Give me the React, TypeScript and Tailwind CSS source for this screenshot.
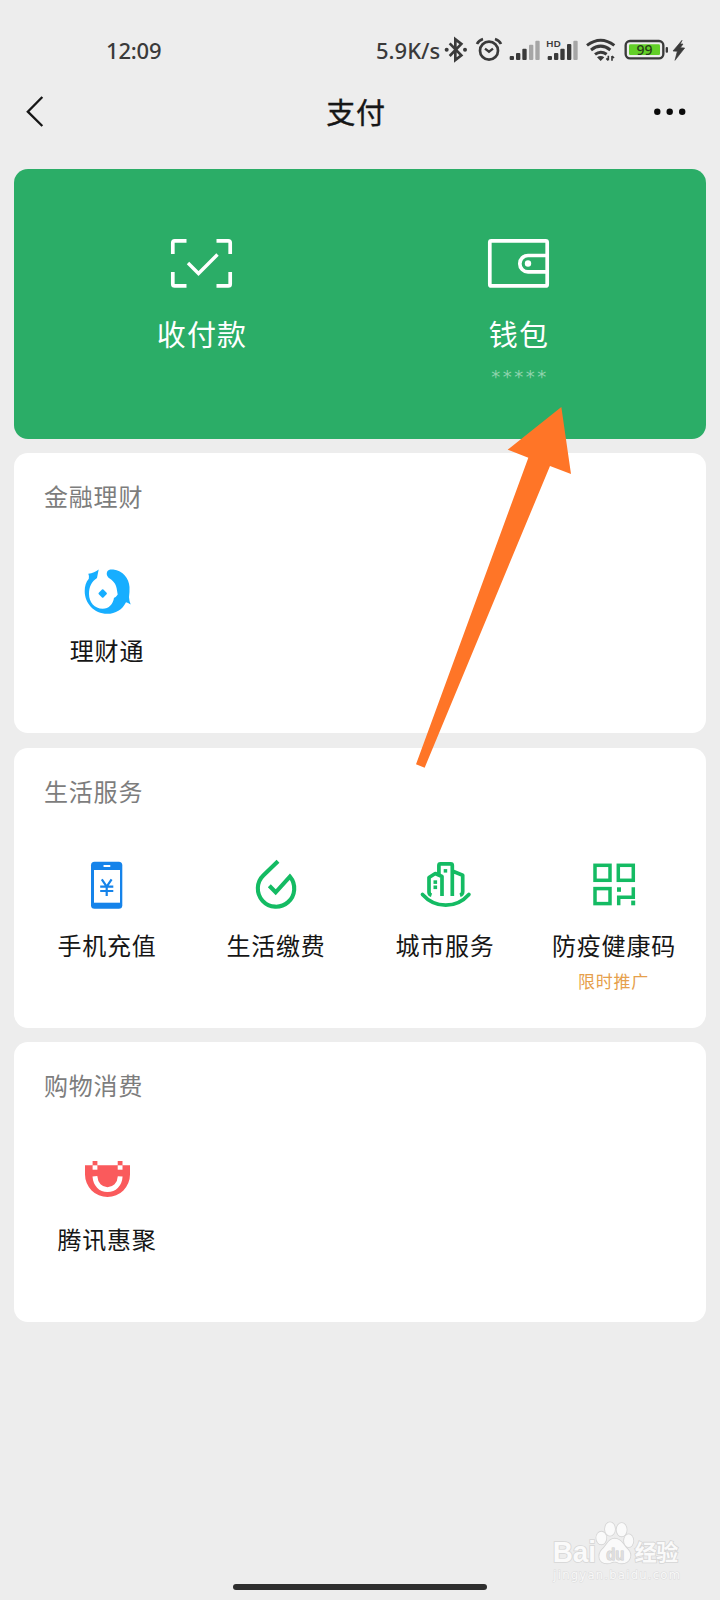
import type { ReactNode } from "react";

function StatusBar() {
  return (
    <div className="flex h-[78px] items-start pt-[35px] text-[#3a3a3a]">
      <div className="ml-[106px] h-[30px] w-[270px] text-[22px] leading-[30px] font-medium tracking-[-0.2px]">12:09</div>
      <div className="h-[30px] w-[67px] text-[22px] leading-[30px] font-medium whitespace-nowrap">5.9K/s</div>
      <svg className="h-[30px] w-[27px]" viewBox="250 30 81 90" fill="none" stroke="currentColor" strokeWidth="8">
        <path d="M270 55 L305 91 L287 105 V43 L305 57 L270 93" />
        <g fill="currentColor" stroke="none">
          <circle cx="261" cy="74" r="6" />
          <circle cx="316" cy="74" r="6" />
        </g>
      </svg>
      <svg className="ml-[5px] h-[30px] w-[28px]" viewBox="345 30 84 90" fill="none" stroke="currentColor" strokeWidth="8">
        <circle cx="387" cy="77" r="27" />
        <path d="M375 71 L387 80 L399 71" strokeWidth="7" />
        <path d="M351 57 Q356 46 369 42 M423 57 Q418 46 405 42" />
      </svg>
      <svg className="ml-[5px] h-[30px] w-[34px]" viewBox="444 30 102 90" fill="currentColor">
        <rect x="449" y="93" width="13" height="12" rx="3" />
        <rect x="468" y="84" width="13" height="21" rx="3" />
        <rect x="487" y="71" width="13" height="34" rx="3" />
        <rect x="507" y="59" width="13" height="46" rx="3" fill="#a6a6a6" />
        <rect x="526" y="47" width="13" height="58" rx="3" fill="#a6a6a6" />
      </svg>
      <svg className="ml-[3px] h-[30px] w-[35px]" viewBox="555 30 105 90" fill="currentColor">
        <text x="558" y="66" fontSize="28" fontWeight="600" textLength="45" lengthAdjust="spacingAndGlyphs">HD</text>
        <rect x="563" y="93" width="13" height="12" rx="3" />
        <rect x="582" y="84" width="13" height="21" rx="3" />
        <rect x="601" y="71" width="13" height="34" rx="3" />
        <rect x="621" y="57" width="13" height="48" rx="3" />
        <rect x="640" y="47" width="13" height="58" rx="3" fill="#a6a6a6" />
      </svg>
      <svg className="ml-[5px] h-[30px] w-[32px]" viewBox="675 30 96 90" fill="none" stroke="currentColor" strokeWidth="9">
        <path d="M681 61 Q722 30 763 61" />
        <path d="M693 75 Q722 52 751 75" />
        <path d="M705 88 Q722 75 740 88" />
        <path d="M711 97 Q722 89 733 97 L722 108Z" fill="currentColor" stroke="none" />
        <path d="M745 92 V106 M739 100 L745 106 M756 107 V93 M762 99 L756 93" strokeWidth="5" />
      </svg>
      <svg className="ml-[6px] h-[30px] w-[46px]" viewBox="789 30 138 90">
        <rect x="797" y="48" width="113" height="52" rx="13" fill="none" stroke="#3a3a3a" strokeWidth="7" />
        <rect x="807" y="58" width="93" height="32" rx="4" fill="#62cf27" />
        <rect x="917" y="66" width="7" height="17" rx="3" fill="#3a3a3a" />
        <text x="853.500" y="89" textAnchor="middle" fontSize="42" fontWeight="500" fill="#263d18">99</text>
      </svg>
      <svg className="ml-[3px] h-[30px] w-[15px]" viewBox="936 30 45 90" fill="currentColor">
        <path d="M966 46 L939 78 L952 79 L945 106 L974 69 L961 68 L969 57 L961 57Z" stroke="currentColor" strokeWidth="2" />
      </svg>
    </div>
  );
}

function Header() {
  return (
    <header className="flex h-[91px] items-start justify-between pl-[25px] pr-[32px] text-[#161616]">
      <svg className="mt-[16px] h-[36px] w-[20px]" viewBox="75 207 60 108" fill="none" stroke="currentColor" strokeWidth="7">
        <path d="M127 216 L83.500 260 L127 303" />
      </svg>
      <h1 className="ml-[13px] mt-[13px] text-[29px] leading-[44px] tracking-[0.8px] font-normal [-webkit-text-stroke:0.4px_#161616]">支付</h1>
      <svg className="mt-[24px] h-[20px] w-[34px]" viewBox="0 0 34 20" fill="#0a0a0a">
        <circle cx="3.300" cy="9.800" r="3.200" />
        <circle cx="15.700" cy="9.800" r="3.200" />
        <circle cx="28.200" cy="9.800" r="3.200" />
      </svg>
    </header>
  );
}

function PayCard() {
  return (
    <section className="mx-[14px] flex h-[270px] justify-center rounded-[14px] bg-[#2bad67] pt-[66px] text-white">
      <div className="flex w-[317px] flex-col items-center">
        <svg className="h-[56px] w-[69px]" viewBox="0 0 69 56" fill="none" stroke="currentColor" strokeWidth="3.700">
          <path d="M5.800 19 V7.800 Q5.800 5.800 7.800 5.800 H19.500 M49.500 5.800 H61.200 Q63.200 5.800 63.200 7.800 V19 M63.200 37 V48.900 Q63.200 50.900 61.200 50.900 H49.500 M19.500 50.900 H7.800 Q5.800 50.900 5.800 48.900 V37" />
          <path d="M21 28 L31.500 38.500 L50.500 19.500" strokeWidth="3.400" />
        </svg>
        <div className="mt-[22px] pl-[1px] text-[29px] leading-[44px] tracking-[1.2px]">收付款</div>
      </div>
      <div className="flex w-[317px] flex-col items-center">
        <svg className="h-[56px] w-[69px]" viewBox="0 0 69 56" fill="none" stroke="currentColor" strokeWidth="3.700">
          <rect x="5.800" y="5.800" width="57.400" height="45.100" rx="1.500" />
          <path d="M63 20.500 H44 A8.200 8.200 0 0 0 44 36.900 H63" />
          <circle cx="44" cy="28.500" r="3.200" fill="currentColor" stroke="none" />
        </svg>
        <div className="mt-[22px] pl-[1px] text-[29px] leading-[44px] tracking-[1.2px]">钱包</div>
        <div className="mt-[8px] pl-[3px] font-['DejaVu_Sans',sans-serif] text-[18px] leading-[24px] tracking-[2.500px] text-[#8ed3ad]">*****</div>
      </div>
    </section>
  );
}

function FishIcon() {
  return (
    <svg className="size-[60px]" viewBox="0 0 60 60" fill="#17aeff">
      <path d="M11.300 13.800 Q17.500 13.200 21.700 9.600 Q20.700 14.500 20 18 C14.500 21.500 12 27 12 34 C12 42 17.500 48.800 25.700 48.800 C32 48.800 36.200 44 37 37.800 Q38.200 38 40.700 34.500 L40 30.500 C39.500 25 37 21.500 33 18.800 C30.500 17 29 15 30 12 C31 9.500 33.500 9.300 36.300 9.500 C46 10.500 52 18.500 52.500 27 Q52.700 32 52 37.200 Q52.200 41 53.700 44.500 Q50.800 42.500 49 42.200 C45.500 49.500 38.500 53.800 30.300 53.800 C17 53.800 7.700 43 7.700 31.200 C7.700 26 9 22 11.800 18.800 Q12.400 16 11.300 13.800Z" />
      <path d="M25.700 30.300 L28.900 33.500 L25.700 36.700 L22.500 33.500Z" stroke="#17aeff" strokeWidth="2" strokeLinejoin="round" />
    </svg>
  );
}

function PhoneIcon() {
  return (
    <svg className="size-[60px]" viewBox="0 0 60 60">
      <rect x="14" y="6.700" width="31.300" height="47" rx="3.500" fill="#1583ea" />
      <rect x="17" y="15" width="26" height="32.700" fill="#fff" />
      <rect x="26.500" y="9.900" width="6.800" height="2" rx="0.500" fill="#fff" />
      <path d="M24.800 24.300 L29.700 31.500 L34.600 24.300 M23.200 31.700 H36.300 M23.200 36 H36.300 M29.700 31 V41" fill="none" stroke="#1583ea" strokeWidth="2.200" />
    </svg>
  );
}

function DropIcon() {
  return (
    <svg className="size-[60px]" viewBox="0 0 60 60" fill="none" stroke="#14bb63" strokeWidth="4.100">
      <path d="M32 6.200 L17.500 20.300 A18.200 18.200 0 1 0 43.900 21.700 L29.700 37.300 L23.300 30.700" />
    </svg>
  );
}

function CityIcon() {
  return (
    <svg className="size-[60px]" viewBox="0 0 60 60" fill="none" stroke="#14bb63" strokeWidth="3.700" strokeLinejoin="round">
      <path d="M7.500 39.500 Q17 50.200 30.700 50.200 Q44.400 50.200 53.900 39.500" strokeLinecap="round" />
      <path d="M16.500 40.300 Q14 39.500 14 37 V22.500 L20.300 18.500 L27 21.500 V41" />
      <path d="M23.900 19.500 V10.500 Q23.900 8.900 25.500 8.900 H35.700 Q37.300 8.900 37.300 10.500 V41 M37.300 16 L47.700 20.300 V36.500 Q47.700 39.500 45 40.300" />
      <g fill="#14bb63" stroke="none">
        <rect x="28.700" y="14.100" width="3.500" height="3.500" />
        <rect x="18.500" y="25.300" width="3.600" height="3.600" />
        <rect x="18.500" y="30.500" width="3.600" height="3.600" />
      </g>
    </svg>
  );
}

function CodeIcon() {
  return (
    <svg className="size-[60px]" viewBox="0 0 60 60" fill="none" stroke="#14bb63" strokeWidth="3.500">
      <rect x="11" y="10.300" width="15" height="15" />
      <rect x="34.300" y="10.300" width="15" height="15" />
      <rect x="11" y="33.600" width="15" height="15" />
      <path d="M34.700 50.300 V42.300 H49.300 V32.300" />
      <g fill="#14bb63" stroke="none">
        <rect x="33" y="32.300" width="4" height="4.500" />
        <rect x="47.200" y="45.600" width="4" height="4.700" />
      </g>
    </svg>
  );
}

function BagIcon() {
  return (
    <svg className="size-[60px]" viewBox="0 0 60 60">
      <path d="M8 16.300 H53 V25.500 A22.500 22.500 0 0 1 8 25.500Z" fill="#fa5a5c" />
      <g fill="#fa5a5c">
        <rect x="15.600" y="12" width="4.800" height="4.400" />
        <rect x="40.700" y="12" width="4.800" height="4.400" />
      </g>
      <g fill="#fff">
        <rect x="15.600" y="16.400" width="4.800" height="4.300" />
        <rect x="40.700" y="16.400" width="4.800" height="4.300" />
      </g>
      <path d="M17.900 27.300 C18.500 35.500 23.500 40.600 30.500 40.600 C37.500 40.600 42.700 35.500 43.200 27.300" fill="none" stroke="#fff" strokeWidth="4.800" />
    </svg>
  );
}

type Service = { name: string; icon: ReactNode; note?: string };

const sections: { title: string; items: Service[] }[] = [
  { title: "金融理财", items: [{ name: "理财通", icon: <FishIcon /> }] },
  {
    title: "生活服务",
    items: [
      { name: "手机充值", icon: <PhoneIcon /> },
      { name: "生活缴费", icon: <DropIcon /> },
      { name: "城市服务", icon: <CityIcon /> },
      { name: "防疫健康码", icon: <CodeIcon />, note: "限时推广" },
    ],
  },
  { title: "购物消费", items: [{ name: "腾讯惠聚", icon: <BagIcon /> }] },
];

function ServiceCard({ title, items }: { title: string; items: Service[] }) {
  return (
    <section className="h-[279.700px] rounded-[14px] bg-white px-2 pt-[26px]">
      <h2 className="pl-[22px] text-[24px] leading-[36px] tracking-[0.8px] text-[#7d7d7d]">{title}</h2>
      <div className="mt-[45px] grid grid-cols-4">
        {items.map((item) => (
          <div key={item.name} className="flex flex-col items-center">
            {item.icon}
            <div className="mt-[13px] pl-[1px] text-[24px] leading-[36px] tracking-[0.8px] whitespace-nowrap text-[#161616]">{item.name}</div>
            {item.note && <div className="mt-[6px] text-[17px] leading-[24px] tracking-[0.8px] text-[#e6a04c]">{item.note}</div>}
          </div>
        ))}
      </div>
    </section>
  );
}

function Pointer() {
  return (
    <svg className="pointer-events-none absolute left-[400px] top-[390px] h-[390px] w-[190px]" viewBox="0 0 570 1170" fill="#ff7527">
      <path d="M484 51 L513 252 L450 228 L74 1133 L48 1123 L385 203 L323 179Z" />
    </svg>
  );
}

function Watermark() {
  return (
    <svg className="pointer-events-none absolute left-[530px] top-[1500px] h-[100px] w-[190px]" viewBox="0 0 570 300" fill="#fafafa" stroke="#d6d6d6" strokeWidth="5" paintOrder="stroke">
      <text x="68" y="185" fontFamily="Liberation Sans" fontWeight="700" fontSize="86" textLength="130" lengthAdjust="spacingAndGlyphs">Bai</text>
      <ellipse cx="214" cy="114" rx="15" ry="19" />
      <ellipse cx="240" cy="87" rx="15" ry="20" />
      <ellipse cx="275" cy="89" rx="15" ry="20" />
      <ellipse cx="296" cy="122" rx="14" ry="19" />
      <path d="M254 116 C275 116 282 139 294 149 C309 165 299 190 276 190 C262 190 266 185 254 185 C242 185 244 190 231 190 C206 190 202 165 216 149 C230 138 234 116 254 116Z" />
      <text x="229" y="181" fontFamily="Liberation Sans" fontWeight="700" fontSize="52" fill="#dedede" stroke="#cdcdcd" strokeWidth="3" textLength="54" lengthAdjust="spacingAndGlyphs">du</text>
      <text x="314" y="181" fontFamily="Noto Sans CJK SC" fontWeight="700" fontSize="66" textLength="131">经验</text>
      <text x="70" y="238" fontFamily="DejaVu Sans" fontSize="35" fill="#f8f8f8" stroke="#dcdcdc" strokeWidth="3" textLength="380">jingyan.baidu.com</text>
    </svg>
  );
}

export default function App() {
  return (
    <div className="relative flex h-[1600px] w-[720px] flex-col overflow-hidden bg-[#ededed] font-['Noto_Sans','Noto_Sans_CJK_SC',sans-serif]">
      <StatusBar />
      <Header />
      <PayCard />
      <main className="mx-[14px] mt-[14.400px] flex flex-col gap-[14.800px]">
        {sections.map((section) => (
          <ServiceCard key={section.title} {...section} />
        ))}
      </main>
      <div className="mt-auto mb-[10px] h-[6px] w-[254px] self-center rounded-full bg-[#2e2e2e]" />
      <Pointer />
      <Watermark />
    </div>
  );
}
